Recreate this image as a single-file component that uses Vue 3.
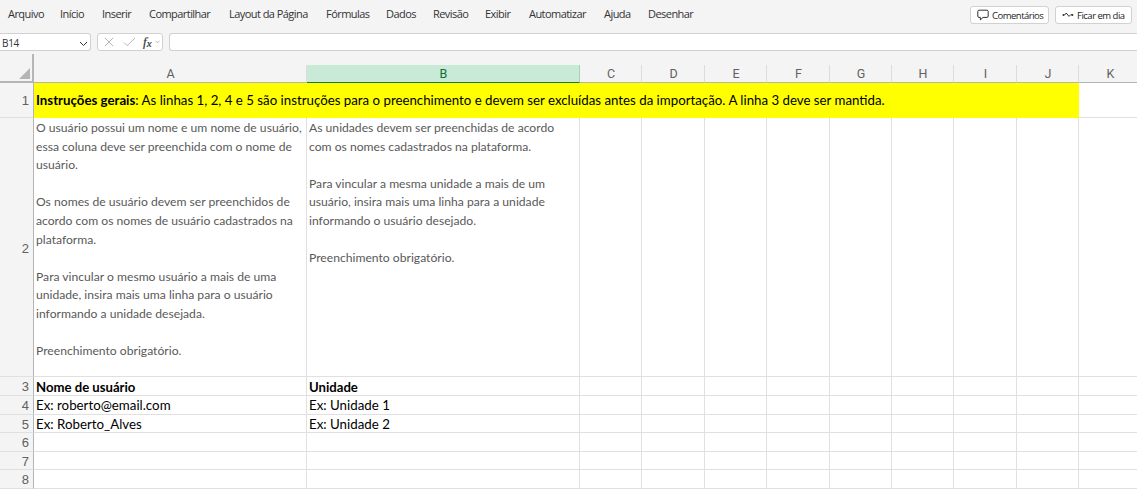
<template>
  <div class="excel">
    <header class="menu-bar">
      <nav class="menu">
        <span v-for="item in menu" :key="item.label" :style="{ width: item.width + 'px' }">{{ item.label }}</span>
      </nav>
      <div class="actions">
        <button class="action comments">
          <svg width="12" height="12" viewBox="0 0 12 12">
            <path d="M2 1.200h8a1.200 1.200 0 0 1 1.200 1.200v4.800A1.200 1.200 0 0 1 10 8.400H6L3.400 10.900V8.400H2A1.200 1.200 0 0 1 .8 7.200V2.400A1.200 1.200 0 0 1 2 1.200z" />
          </svg>
          <span>Comentários</span>
        </button>
        <button class="action catch-up">
          <svg width="12" height="12" viewBox="0 0 12 12">
            <path d="M1 6h1.500L4.200 4 7 7.400 8.800 5.600 10.500 6" />
            <circle cx="1.400" cy="6" r=".9" />
            <circle cx="10.400" cy="6" r="1" />
          </svg>
          <span>Ficar em dia</span>
        </button>
      </div>
    </header>

    <div class="formula-bar">
      <div class="name-box">
        <span>B14</span>
        <svg width="9" height="6" viewBox="0 0 9 6"><path d="M1 1l3.500 3.500L8 1" /></svg>
      </div>
      <div class="formula-tools">
        <svg width="10" height="10" viewBox="0 0 10 10"><path d="M.8.8l8.400 8.400M9.200.8L.8 9.200" /></svg>
        <svg class="check" width="13" height="10" viewBox="0 0 13 10"><path d="M1 5.500l3.200 3.200L12 1" /></svg>
        <span class="fx">f<sub>x</sub></span>
        <svg class="more" width="5" height="4" viewBox="0 0 5 4"><path d="M.5.8l2 2 2-2" /></svg>
      </div>
      <div class="formula-input"></div>
    </div>

    <div class="sheet">
      <div class="row column-heads">
        <div class="corner">
          <svg width="11" height="11" viewBox="0 0 11 11"><path d="M11 0v11H0z" /></svg>
        </div>
        <div
          v-for="col in columns"
          :key="col.name"
          class="column-head"
          :class="{ selected: col.name === 'B' }"
          :style="{ width: col.width + 'px' }"
        >{{ col.name }}</div>
      </div>

      <div v-for="row in rows" :key="row.number" class="row" :style="{ height: row.height + 'px' }">
        <div class="row-head" :class="{ tall: row.number === 2 }">{{ row.number }}</div>
        <template v-if="row.number === 1">
          <div class="banner"><b>Instruções gerais</b><span>: As linhas 1, 2, 4 e 5 são instruções para o preenchimento e devem ser excluídas antes da importação. A linha 3 deve ser mantida.</span></div>
          <div class="cell rest"></div>
        </template>
        <template v-else>
          <div
            v-for="(col, i) in columns"
            :key="col.name"
            class="cell"
            :class="{ notes: row.number === 2, bold: row.number === 3 }"
            :style="{ width: col.width + 'px' }"
          >{{ row.cells[i] }}</div>
        </template>
      </div>
    </div>
  </div>
</template>

<script setup>
const menu = [
  { label: "Arquivo", width: 52 },
  { label: "Início", width: 42 },
  { label: "Inserir", width: 47 },
  { label: "Compartilhar", width: 80 },
  { label: "Layout da Página", width: 97 },
  { label: "Fórmulas", width: 60 },
  { label: "Dados", width: 47 },
  { label: "Revisão", width: 52 },
  { label: "Exibir", width: 44 },
  { label: "Automatizar", width: 75 },
  { label: "Ajuda", width: 44 },
  { label: "Desenhar", width: 60 },
];

const columns = [
  { name: "A", width: 273 },
  { name: "B", width: 273 },
  { name: "C", width: 62 },
  { name: "D", width: 63 },
  { name: "E", width: 62 },
  { name: "F", width: 63 },
  { name: "G", width: 62 },
  { name: "H", width: 62 },
  { name: "I", width: 63 },
  { name: "J", width: 62 },
  { name: "K", width: 63 },
];

const userNotes = `O usuário possui um nome e um nome de usuário,
essa coluna deve ser preenchida com o nome de
usuário.

Os nomes de usuário devem ser preenchidos de
acordo com os nomes de usuário cadastrados na
plataforma.

Para vincular o mesmo usuário a mais de uma
unidade, insira mais uma linha para o usuário
informando a unidade desejada.

Preenchimento obrigatório.`;

const unitNotes = `As unidades devem ser preenchidas de acordo
com os nomes cadastrados na plataforma.

Para vincular a mesma unidade a mais de um
usuário, insira mais uma linha para a unidade
informando o usuário desejado.

Preenchimento obrigatório.`;

const rows = [
  { number: 1, height: 35, cells: [] },
  { number: 2, height: 259, cells: [userNotes, unitNotes] },
  { number: 3, height: 19, cells: ["Nome de usuário", "Unidade"] },
  { number: 4, height: 19, cells: ["Ex: roberto@email.com", "Ex: Unidade 1"] },
  { number: 5, height: 18, cells: ["Ex: Roberto_Alves", "Ex: Unidade 2"] },
  { number: 6, height: 19, cells: [] },
  { number: 7, height: 18, cells: [] },
  { number: 8, height: 19, cells: [] },
];
</script>

<style>
body {
  overflow: hidden;
}
</style>

<style scoped>
.excel {
  width: 1137px;
  height: 489px;
  overflow: hidden;
  background: #f4f4f4;
  font-family: "Open Sans", sans-serif;
  color: #333;
}

.excel * {
  box-sizing: border-box;
}

svg {
  flex: none;
  fill: none;
  stroke: #333;
}

.menu-bar {
  display: flex;
  justify-content: space-between;
  height: 33px;
  padding: 0 5px 0 8px;
}

.menu {
  display: flex;
  line-height: 28px;
  font-size: 11px;
  letter-spacing: -0.55px;
  white-space: nowrap;
}

.menu span {
  flex: none;
}

.actions {
  display: flex;
  gap: 6px;
  padding-top: 6px;
}

.action {
  display: flex;
  align-items: center;
  height: 18px;
  padding: 0 6px;
  border: 1px solid #d1d1d1;
  border-radius: 3px;
  background: #fff;
  color: #242424;
  font: 9.5px "Open Sans", sans-serif;
  letter-spacing: -0.5px;
  white-space: nowrap;
}

.comments {
  width: 79px;
  gap: 3px;
}

.catch-up {
  width: 77px;
  gap: 3px;
}

.catch-up circle {
  fill: #333;
  stroke: none;
}

.formula-bar {
  display: flex;
  height: 21px;
}

.name-box,
.formula-tools,
.formula-input {
  height: 18px;
  border: 1px solid #d1d1d1;
  border-radius: 3px;
  background: #fff;
}

.name-box {
  display: flex;
  align-items: center;
  justify-content: space-between;
  width: 91px;
  margin-right: 6px;
  padding: 1px 2px 0;
  border-left: 0;
  border-radius: 0 3px 3px 0;
  font-size: 10px;
  letter-spacing: -0.3px;
}

.name-box svg {
  margin-top: 2px;
}

.formula-tools {
  display: flex;
  align-items: center;
  width: 66px;
  margin-right: 6px;
  padding-left: 6px;
}

.formula-tools svg {
  stroke: #b5b5b5;
}

.formula-tools .check {
  margin-left: 9px;
}

.fx {
  width: 12px;
  margin-left: 7px;
  font: italic 13px/14px "Liberation Serif", serif;
  -webkit-text-stroke: 0.2px #333;
}

.fx sub {
  font-size: 11px;
  line-height: 0;
  vertical-align: -1px;
}

.formula-input {
  flex: 1;
  border-right: 0;
  border-radius: 3px 0 0 3px;
}

.sheet {
  width: 1142px;
}

.row {
  display: flex;
}

.column-heads {
  height: 29px;
}

.corner {
  display: flex;
  align-items: flex-end;
  justify-content: flex-end;
  flex: none;
  width: 34px;
  padding: 0 2px 2px 0;
  border-right: 2px solid #b5b5b5;
  border-bottom: 2px solid #b5b5b5;
}

.corner svg {
  fill: #b5b5b5;
  stroke: none;
}

.column-head {
  flex: none;
  height: 18px;
  margin-top: 11px;
  padding-left: 1px;
  border-right: 1px solid #dcdcdc;
  border-bottom: 1px solid #b5b5b5;
  font: 12.5px/18px Roboto, sans-serif;
  color: #616161;
  text-align: center;
}

.column-head.selected {
  border-right-color: #9fd5b7;
  border-bottom-color: #107c41;
  background: #caead8;
  color: #0f703b;
}

.row-head {
  display: flex;
  align-items: center;
  justify-content: flex-end;
  flex: none;
  width: 34px;
  padding: 2px 4px 0 0;
  border-right: 1px solid #b5b5b5;
  border-bottom: 1px solid #e0e0e0;
  font: 13px/16px "Liberation Sans", sans-serif;
  color: #616161;
}

.row-head.tall {
  padding-top: 4px;
}

.banner {
  width: 1045px;
  padding-left: 2px;
  background: #ff0;
  font: 13.27px/35px Lato, sans-serif;
  color: #000;
  white-space: nowrap;
}

.cell {
  flex: none;
  padding: 0 2px;
  border-right: 1px solid #e0e0e0;
  border-bottom: 1px solid #e0e0e0;
  background: #fff;
  font: 13.3px/18px Lato, sans-serif;
  color: #000;
  white-space: pre;
}

.cell.rest {
  width: 63px;
}

.cell.notes {
  padding-top: 1px;
  font-size: 12.15px;
  line-height: 18.6px;
  color: #595959;
}

.cell.bold {
  line-height: 20px;
  font-size: 13.15px;
  font-weight: 700;
}
</style>
